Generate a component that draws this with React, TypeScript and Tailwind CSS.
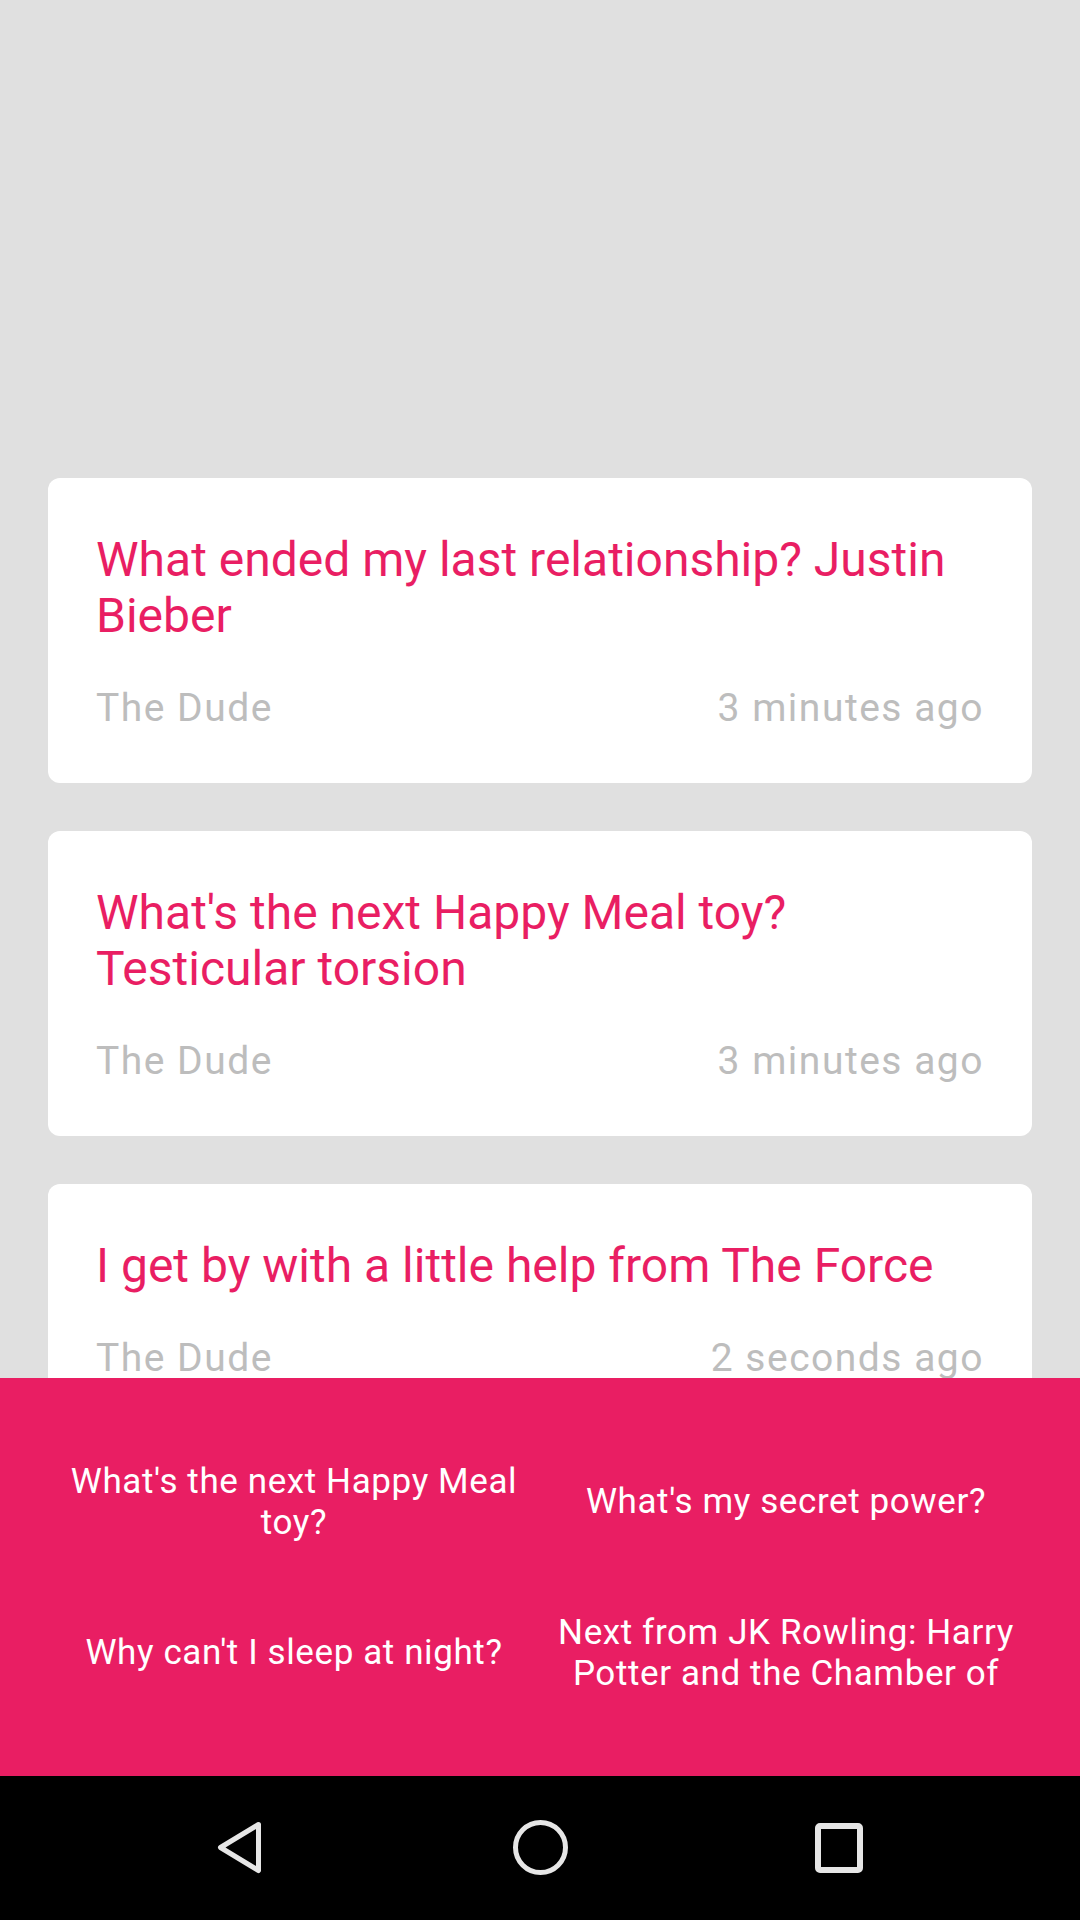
const questions = [
  {
    title: "What ended my last relationship? Justin Bieber",
    author: "The Dude",
    time: "3 minutes ago",
  },
  {
    title: "What's the next Happy Meal toy? Testicular torsion",
    author: "The Dude",
    time: "3 minutes ago",
  },
  {
    title: "I get by with a little help from The Force",
    author: "The Dude",
    time: "2 seconds ago",
  },
];

const prompts = [
  "What's the next Happy Meal toy?",
  "What's my secret power?",
  "Why can't I sleep at night?",
  "Next from JK Rowling: Harry Potter and the Chamber of",
];

function QuestionCard({ title, author, time }: { title: string; author: string; time: string }) {
  return (
    <div className="shrink-0 bg-white rounded-[12px] px-12 pt-[54px] pb-[53px] flex flex-col gap-[43px]">
      <p className="text-[48px] leading-[56px] text-[#e91e63]">{title}</p>
      <div className="flex justify-between text-[39px] leading-[43px] tracking-[1.5px] text-[#bdbdbd]">
        <span>{author}</span>
        <span>{time}</span>
      </div>
    </div>
  );
}

function NavBar() {
  return (
    <div className="h-[144px] shrink-0 bg-black flex justify-center items-center">
      <div className="w-[300px] flex justify-center">
        <svg width="60" height="60" viewBox="0 0 60 60" fill="none" stroke="#e6e6e6" strokeWidth="5" strokeLinejoin="round">
          <path d="M48.5 6.5 L10.5 29.5 L48.5 52.5 Z" />
        </svg>
      </div>
      <div className="w-[300px] flex justify-center">
        <svg width="60" height="60" viewBox="0 0 60 60" fill="none" stroke="#e6e6e6" strokeWidth="5">
          <circle cx="30.5" cy="29.5" r="25" />
        </svg>
      </div>
      <div className="w-[300px] flex justify-center">
        <svg width="60" height="60" viewBox="0 0 60 60" fill="none" stroke="#e6e6e6" strokeWidth="6">
          <rect x="8" y="8" width="42" height="44" rx="2" />
        </svg>
      </div>
    </div>
  );
}

export default function App() {
  return (
    <div className="w-[1080px] h-[1920px] bg-[#e0e0e0] flex flex-col overflow-hidden font-['Roboto',sans-serif]">
      <div className="flex-1 min-h-0 overflow-hidden pt-[478px] px-12 flex flex-col gap-12">
        {questions.map((q, i) => (
          <QuestionCard key={i} {...q} />
        ))}
      </div>

      <div className="h-[398px] shrink-0 bg-[#e91e63] px-12 py-12 grid grid-cols-2 grid-rows-2">
        {prompts.map((p, i) => (
          <div key={i} className="flex items-center justify-center">
            <p className="text-[35px] leading-[41px] tracking-[0.6px] text-white text-center">{p}</p>
          </div>
        ))}
      </div>

      <NavBar />
    </div>
  );
}
